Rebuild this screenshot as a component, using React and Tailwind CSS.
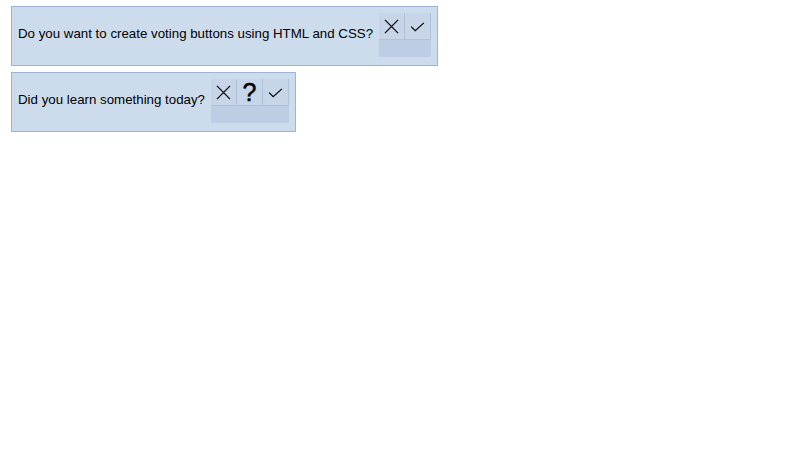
const polls = [
  { question: 'Do you want to create voting buttons using HTML and CSS?', options: ['no', 'yes'] },
  { question: 'Did you learn something today?', options: ['no', 'maybe', 'yes'] },
]

function VoteIcon({ kind }) {
  if (kind === 'maybe') {
    return <span className="text-[25px] font-normal leading-none text-black [-webkit-text-stroke:0.5px_black]">?</span>
  }
  if (kind === 'no') {
    return (
      <svg width="15" height="15" viewBox="0 0 16 16" fill="none" stroke="black" strokeWidth="1.3">
        <path d="M1 1 L15 15 M15 1 L1 15" />
      </svg>
    )
  }
  return (
    <svg width="15" height="10" viewBox="0 0 16 11" fill="none" stroke="black" strokeWidth="1.3">
      <path d="M1 5 L5.5 9.5 L15 1" />
    </svg>
  )
}

function Poll({ question, options }) {
  return (
    <div className="flex w-fit items-start gap-[6px] border border-[#9db4d2] bg-[#cddcec] pb-[8px] pl-[6px] pr-[6px] pt-[6px]">
      <p className="mt-[13px] text-[13.3px] leading-[16px] text-black">{question}</p>
      <div className="flex h-[44px] items-start bg-[#bdcde4]">
        {options.map((kind) => (
          <button
            key={kind}
            type="button"
            className="flex h-[27px] w-[26px] items-center justify-center border-b border-r border-[#b0c1d9] bg-[#c7d5e8] pt-[1px]"
          >
            <VoteIcon kind={kind} />
          </button>
        ))}
      </div>
    </div>
  )
}

export default function App() {
  return (
    <div className="flex min-h-[450px] flex-col gap-[6px] bg-white px-[11px] pt-[6px] font-['Liberation_Sans',Arial,sans-serif]">
      {polls.map((poll) => (
        <Poll key={poll.question} {...poll} />
      ))}
    </div>
  )
}
